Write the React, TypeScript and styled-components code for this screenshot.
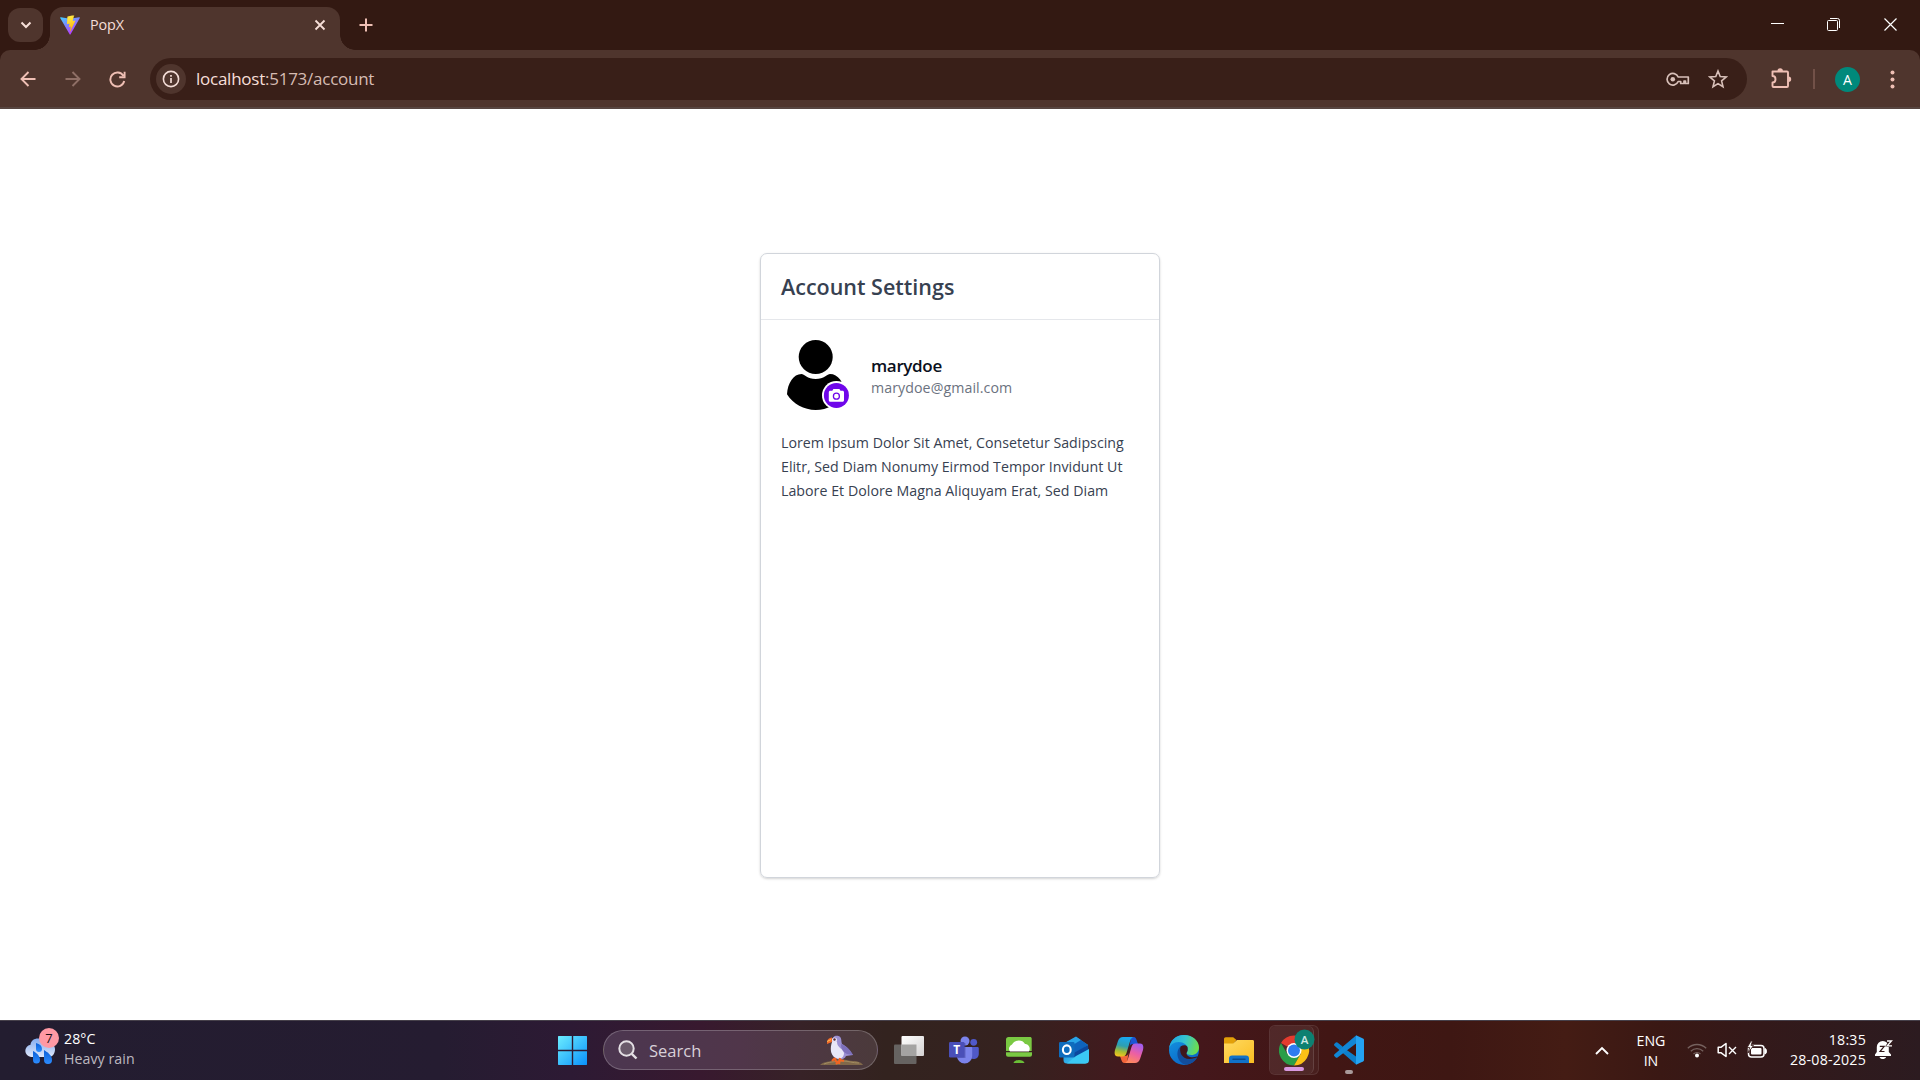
import React from "react";
import styled, { createGlobalStyle } from "styled-components";

const Global = createGlobalStyle`
  * { box-sizing: border-box; }
  html, body { margin: 0; padding: 0; }
  body {
    width: 1920px;
    height: 1080px;
    overflow: hidden;
    background: #fff;
    font-family: "Open Sans", "Noto Sans", sans-serif;
  }
  svg { display: block; flex: none; }
`;

const Screen = styled.div`
  width: 1920px;
  height: 1080px;
  display: flex;
  flex-direction: column;
  overflow: hidden;
`;

/* ---------- Browser ---------- */
const TabStrip = styled.div`
  height: 50px;
  flex: none;
  display: flex;
  background: #331912;
  padding-left: 8px;
`;

const TabSearch = styled.div`
  width: 35px;
  height: 34px;
  margin-top: 8px;
  border-radius: 12px;
  background: #4f352d;
  display: grid;
  place-items: center;
`;

const Tab = styled.div`
  position: relative;
  width: 290px;
  height: 43px;
  margin: 7px 0 0 7px;
  padding: 0 13px 7px 10px;
  display: flex;
  align-items: center;
  background: #4f352d;
  border-radius: 13px 13px 0 0;
  &::before, &::after {
    content: "";
    position: absolute;
    bottom: 0;
    width: 15px;
    height: 15px;
  }
  &::before {
    left: -15px;
    background: radial-gradient(circle at 0 0, transparent 14.5px, #4f352d 15px);
  }
  &::after {
    right: -15px;
    background: radial-gradient(circle at 100% 0, transparent 14.5px, #4f352d 15px);
  }
`;

const TabTitle = styled.span`
  flex: 1;
  margin-left: 10px;
  font-size: 14.4px;
  line-height: 20px;
  letter-spacing: -0.1px;
  color: #f5ded8;
`;

const NewTab = styled.div`
  width: 50px;
  padding-left: 2px;
  display: grid;
  place-items: center;
`;

const WindowButtons = styled.div`
  margin-left: auto;
  display: flex;
  height: 49px;
`;

const WindowButton = styled.div<{ $w: number }>`
  width: ${(p) => p.$w}px;
  display: grid;
  place-items: center;
`;

const ToolbarBack = styled.div`
  height: 59px;
  flex: none;
  background: #331912;
`;

const Toolbar = styled.div`
  height: 59px;
  display: flex;
  align-items: center;
  padding: 1px 0 0 5px;
  background: #4f352d;
  border-radius: 10px 10px 0 0;
  border-bottom: 2px solid #574540;
`;

const NavButton = styled.div<{ $w?: number }>`
  flex: none;
  width: ${(p) => p.$w ?? 45}px;
  height: 45px;
  display: grid;
  place-items: center;
`;

const AddressBar = styled.div`
  flex: none;
  width: 1597px;
  height: 42px;
  margin-left: 10px;
  padding: 0 9px 0 6px;
  display: flex;
  align-items: center;
  border-radius: 21px;
  background: #391f18;
`;

const InfoCircle = styled.div`
  width: 30px;
  height: 30px;
  border-radius: 50%;
  background: #4f352d;
  display: grid;
  place-items: center;
`;

const Url = styled.span`
  margin-left: 10px;
  flex: 1;
  font-size: 17px;
  line-height: 24px;
  letter-spacing: -0.25px;
  color: #f7dfd8;
  span { color: #d6bcb3; }
`;

const AddressIcon = styled.div`
  width: 40px;
  display: grid;
  place-items: center;
`;

const Separator = styled.div`
  flex: none;
  width: 2px;
  height: 20px;
  margin: 0 20px 0 -2px;
  background: #725148;
`;

const ProfileBubble = styled.div`
  flex: none;
  width: 25px;
  height: 25px;
  border-radius: 50%;
  background: #00897b;
  color: #fff;
  font: 14px/25px "Open Sans", sans-serif;
  text-align: center;
`;

/* ---------- Page ---------- */
const Page = styled.main`
  flex: 1;
  display: flex;
  justify-content: center;
  align-items: flex-start;
  padding-top: 144px;
  background: #fff;
`;

const Card = styled.section`
  width: 400px;
  height: 625px;
  border: 1px solid #d1d5db;
  border-radius: 7px;
  box-shadow: 0 1px 3px rgba(0, 0, 0, 0.1), 0 1px 2px rgba(0, 0, 0, 0.08);
`;

const CardHeader = styled.header`
  height: 66px;
  padding: 0 20px;
  display: flex;
  align-items: center;
  border-bottom: 1px solid #e5e7eb;
`;

const CardTitle = styled.h1`
  margin: 0;
  font-size: 21.5px;
  line-height: 30px;
  font-weight: 600;
  letter-spacing: 0;
  color: #374151;
`;

const Profile = styled.div`
  display: flex;
  gap: 20px;
  padding: 20px 20px 0;
`;

const Identity = styled.div`
  padding-top: 14px;
`;

const Name = styled.div`
  font-size: 17px;
  line-height: 24px;
  font-weight: 600;
  letter-spacing: -0.35px;
  color: #0b1020;
`;

const Email = styled.div`
  font-size: 14.2px;
  line-height: 20px;
  letter-spacing: 0.08px;
  color: #6b7280;
`;

const Bio = styled.p`
  margin: 20px 0 0 20px;
  font-size: 14.2px;
  line-height: 24px;
  color: #374151;
  white-space: nowrap;
`;

const BioLine = styled.span<{ $ls: number }>`
  display: block;
  letter-spacing: ${(p) => p.$ls}px;
`;

/* ---------- Taskbar ---------- */
const Taskbar = styled.footer`
  height: 60px;
  flex: none;
  display: flex;
  align-items: stretch;
  border-top: 1px solid #46404a;
  color: #fff;
  background: linear-gradient(90deg, #231d30 0, #251c31 440px, #2d1a34 570px, #38192f 700px, #372227 800px, #33231f 885px, #35221f 1010px, #421a1e 1120px, #44171b 1200px, #411614 1330px, #3e1713 1450px, #441c14 1565px, #3a1814 1660px, #33191a 1760px, #2c1b20 1920px);
`;

const Weather = styled.div`
  width: 545px;
  padding: 7px 0 0 24px;
  display: flex;
  gap: 5px;
`;

const TwoLines = styled.div<{ $align?: string; $ls?: number; $dim?: boolean; $top?: number }>`
  font-size: 14.2px;
  line-height: 20px;
  padding-top: ${(p) => p.$top ?? 0}px;
  letter-spacing: ${(p) => p.$ls ?? 0}px;
  text-align: ${(p) => p.$align ?? "left"};
  white-space: nowrap;
  div + div { color: ${(p) => (p.$dim ? "#bdb9c0" : "#fff")}; }
`;

const TaskCell = styled.div<{ $w?: number }>`
  width: ${(p) => p.$w ?? 55}px;
  padding-bottom: 1px;
  display: flex;
  align-items: center;
  justify-content: center;
`;

const SearchBox = styled.div`
  width: 275px;
  height: 40px;
  margin: 9px 3px 0 4px;
  padding: 0 12px 0 14px;
  display: flex;
  align-items: center;
  border: 1px solid rgba(255, 255, 255, 0.22);
  border-radius: 20px;
  background: linear-gradient(90deg, #4c3650, #50364a 50%, #4b3a3b);
  span {
    flex: 1;
    margin: 1px 0 0 11px;
    font-size: 16.5px;
    line-height: 24px;
    color: #d8d0d8;
  }
`;

const ActiveTile = styled.div`
  width: 50px;
  height: 50px;
  display: flex;
  border-radius: 6px;
  border: 1px solid rgba(255, 255, 255, 0.09);
  background: rgba(255, 255, 255, 0.04);
`;

const ActiveFace = styled.div`
  width: 44px;
  height: 48px;
  padding: 3px 0 0 9px;
  border-radius: 6px;
  border-right: 1px solid rgba(255, 255, 255, 0.12);
  background: rgba(255, 255, 255, 0.045);
`;

const Indicator = styled.div<{ $w: number; $c: string }>`
  width: ${(p) => p.$w}px;
  height: 4px;
  border-radius: 2px;
  background: ${(p) => p.$c};
`;

const CodeCell = styled.div`
  width: 55px;
  display: flex;
  flex-direction: column;
  align-items: center;
  padding-top: 14px;
  gap: 5px;
`;

const Tray = styled.div`
  margin-left: auto;
  display: flex;
  align-items: center;
  padding: 0 18px 1px 0;
`;

const TrayItem = styled.div<{ $w: number }>`
  width: ${(p) => p.$w}px;
  display: flex;
  justify-content: center;
`;

const Clock = styled.div`
  width: 90px;
  display: flex;
  justify-content: flex-end;
`;

const pink = "#efbfb4";

const ViteLogo = () => (
  <svg width="20" height="20" viewBox="0 0 20 20">
    <defs>
      <linearGradient id="va" x1="0" y1="0" x2="0.6" y2="1">
        <stop offset="0" stopColor="#41d1ff" />
        <stop offset="1" stopColor="#bd34fe" />
      </linearGradient>
      <linearGradient id="vb" x1="0.4" y1="0" x2="0.6" y2="1">
        <stop offset="0" stopColor="#ffea45" />
        <stop offset="0.3" stopColor="#ffdd35" />
        <stop offset="1" stopColor="#ffa800" />
      </linearGradient>
    </defs>
    <path d="M19.8 3 10.6 19.3a.6.6 0 0 1-1 0L.2 3c-.3-.5.2-1 .7-.8L10 3.800l9.100-1.600c.5-.1 1 .4.7.8Z" fill="url(#va)" />
    <path d="m14.400.1-6.800 1.300a.3.3 0 0 0-.2.3L7 8.800c0 .2.100.3.3.3l1.900-.4c.2 0 .3.100.3.300l-.6 2.700c0 .2.2.4.4.3l1.100-.3c.2-.1.4.1.400.3l-.9 4.300c-.1.300.300.400.400.200l5-10.500c.1-.2-.100-.4-.3-.4l-1.900.4c-.2 0-.3-.2-.3-.4l1.300-5.200c.1-.2-.1-.3-.3-.3Z" fill="url(#vb)" />
  </svg>
);

const Puffin = () => (
  <svg width="46" height="32" viewBox="0 0 46 32">
    <path d="M1 31c4-4 10-3 15-5 7-2 12 1 18 1 5 0 9 2 10 4Z" fill="#80684a" />
    <path d="M5 30c8-3 13-2 19-3 6 0 9 2 16 2" stroke="#a28c62" fill="none" />
    <path d="M13 7c0-4 3-6 6.500-5C23 3 22 7 23 10c4 2 7 5 11 11l-7 1c-1 3-5 4-9 3-5-2-6-7-5-11Z" fill="#9b90d4" />
    <path d="M13 8c-2 6-2 13 4 16 5 2 8-1 8-5-1-5-7-5-7-11Z" fill="#e8e7f8" />
    <path d="M22 10c5 2 9 5 12 11l-6-1c-4-2-6-5-6-10Z" fill="#7d70bb" />
    <circle cx="15.500" cy="6" r="2.600" fill="#e6e2f5" />
    <circle cx="15.500" cy="5.500" r="1.200" fill="#532b3e" />
    <path d="M13 3.500C9 4 8 6 8 10l5-2Z" fill="#f56a26" />
    <path d="M8 7.500 12 5.500" stroke="#ffc05a" />
    <path d="m16 24-3 3m3-3 1 4m4-4-1 6m1-4 4 1m-5 0-3 3" stroke="#f26522" strokeWidth="2.200" fill="none" />
  </svg>
);

const RainIcon = () => (
  <svg width="35" height="38" viewBox="0 0 35 38">
    <defs>
      <linearGradient id="cloud" x1="0" y1="0" x2="0" y2="1">
        <stop offset="0" stopColor="#7fa9ee" />
        <stop offset="1" stopColor="#dfe7fa" />
      </linearGradient>
      <linearGradient id="drop" x1="0" y1="0" x2="0" y2="1">
        <stop offset="0" stopColor="#0a5fd8" />
        <stop offset="1" stopColor="#2d8dff" />
      </linearGradient>
    </defs>
    <path d="M7 29a6.200 6.200 0 0 1-.5-12.300C7 12 11 10 15 10.500c4-2 9 0 10 4 4 0 6 4 6 7s-2 7.500-6 7.500Z" fill="url(#cloud)" />
    <g fill="url(#drop)">
      <path d="M12 15c4 1 6 3 6 6a3 3 0 0 1-6 0Z" />
      <path d="M9 23c4 2 7 5 7 9a3.500 3.500 0 0 1-7 0Z" />
      <path d="M20 22c5 3 8 6 8 10a4 4 0 0 1-8 0Z" />
    </g>
    <circle cx="25" cy="10" r="10" fill="#ff99a4" />
    <text x="25" y="14.500" textAnchor="middle" fontSize="13" fontFamily="Open Sans, sans-serif" fill="#1c1018">7</text>
  </svg>
);

const Windows = () => (
  <svg width="30" height="30" viewBox="0 0 30 30">
    <defs>
      <linearGradient id="win" gradientUnits="userSpaceOnUse" x1="0" y1="0" x2="30" y2="30">
        <stop offset="0" stopColor="#6ff0ff" />
        <stop offset="1" stopColor="#0a91fb" />
      </linearGradient>
    </defs>
    <path d="M1.500 1h13.300v13.800H1V1.500Zm14.700 0h13.300l.5.5v13.300H16.200ZM1 16.200h13.800V30H1.500L1 29.500Zm15.200 0H30v13.300l-.5.500H16.200Z" fill="url(#win)" />
  </svg>
);

const TaskView = () => (
  <svg width="30" height="30" viewBox="0 0 30 30">
    <defs>
      <linearGradient id="tv" x1="0" y1="0" x2="1" y2="1">
        <stop offset="0" stopColor="#fff" />
        <stop offset="1" stopColor="#d4d2d2" />
      </linearGradient>
    </defs>
    <rect x="0" y="9.500" width="22.500" height="19.500" rx="1" fill="#666361" />
    <rect x="7.500" y="1" width="22.500" height="20" rx="1" fill="url(#tv)" />
    <path d="M7.500 9.500h15V21h-15Z" fill="#a4a3a2" />
  </svg>
);

const Teams = () => (
  <svg width="30" height="30" viewBox="0 0 30 30">
    <circle cx="24.700" cy="7.300" r="3.400" fill="#5059c9" />
    <path d="M20 12h8.500c.8 0 1.300.6 1.300 1.300v6a5 5 0 0 1-9.800 1Z" fill="#5059c9" />
    <circle cx="16" cy="6" r="4.500" fill="#7b83eb" />
    <path d="M8 12h14.200c.6 0 1 .5 1 1v8a7.500 7.500 0 0 1-15.200 0Z" fill="#7b83eb" />
    <path d="M9 8h7.500v15H9Z" fill="#3f3f92" opacity=".45" />
    <rect x="0" y="7" width="15.500" height="15.500" rx="1.300" fill="#4a4fb8" />
    <text x="7.700" y="19" textAnchor="middle" fontSize="12" fontWeight="700" fontFamily="Open Sans, sans-serif" fill="#fff">T</text>
  </svg>
);

const CloudPc = () => (
  <svg width="30" height="30" viewBox="0 0 30 30">
    <path d="M4.500 2H26c1 0 1.700.7 1.700 1.700V16H2V4.500C2 3 3 2 4.500 2Z" fill="#7ac943" />
    <path d="M6 16.500a4.500 4.500 0 0 1 2-7C10.500 4.500 18.500 4 21 9c4 0 6 4.500 3.800 7.500Z" fill="#fff" />
    <path d="M2 17.200h26v2.500a2 2 0 0 1-2 2H4a2 2 0 0 1-2-2Z" fill="#7ac943" />
    <path d="M9.500 28c1-4 10-4 11 0Z" fill="#6abf37" />
  </svg>
);

const Outlook = () => (
  <svg width="30" height="30" viewBox="0 0 30 30">
    <defs>
      <linearGradient id="ol" x1="0" y1="0" x2="1" y2="1">
        <stop offset="0" stopColor="#1578cf" />
        <stop offset="1" stopColor="#49e0ff" />
      </linearGradient>
    </defs>
    <path d="M4.500 9 17 2l12 8v15a3.500 3.500 0 0 1-3.500 3.500H8A3.500 3.500 0 0 1 4.500 25Z" fill="url(#ol)" />
    <path d="M4.500 8.500 17 1.500 22 5 8 13.500H4.500Z" fill="#28a4e8" />
    <path d="m22 5 7 5-13 9h-5l-3-5.500Z" fill="#0e63bd" />
    <path d="m29 10 .5 5L16 23l-3-4Z" fill="#0b479d" />
    <path d="M30 14v11a3.500 3.500 0 0 1-3.500 3.500H8L17 21Z" fill="#3bc9f4" />
    <rect x="0" y="7" width="15.500" height="15.500" rx="1.300" fill="#0f6cbd" />
    <ellipse cx="7.800" cy="14.700" rx="3.900" ry="4.300" fill="none" stroke="#fff" strokeWidth="2.100" />
  </svg>
);

const Copilot = () => (
  <svg width="30" height="30" viewBox="0 0 30 30">
    <defs>
      <linearGradient id="cpa" x1="0.500" y1="0" x2="0.300" y2="1">
        <stop offset="0" stopColor="#19a8f0" />
        <stop offset=".45" stopColor="#2e9fb0" />
        <stop offset=".75" stopColor="#a9bd30" />
        <stop offset="1" stopColor="#f5c320" />
      </linearGradient>
      <linearGradient id="cpb" x1="0.700" y1="0" x2="0.300" y2="1">
        <stop offset="0" stopColor="#a15df0" />
        <stop offset=".5" stopColor="#ec5fa4" />
        <stop offset="1" stopColor="#ff8a5c" />
      </linearGradient>
    </defs>
    <path d="M17 2h2.500c2 0 2.700 1.600 3.300 3.500L24 9h-5c-2 0-3 1-3.500 3Z" fill="#1b55d4" />
    <path d="M13 28h-2.500c-2 0-2.700-1.600-3.300-3.500L6 21h5c2 0 3-1 3.500-3Z" fill="#f2653a" />
    <path d="M9 2h10c-2 1-2.700 3-3.500 6L12.500 18c-.7 2.500-2 3.500-4 3.500H4C.5 21.500.2 18 1 15L4 6c1-2.700 2.500-4 5-4Z" fill="url(#cpa)" />
    <path d="M21 28H11c2-1 2.700-3 3.500-6l3-10c.7-2.500 2-3.500 4-3.500H26c3.500 0 3.800 3.500 3 6.500l-3 9c-1 2.700-2.500 4-5 4Z" fill="url(#cpb)" />
  </svg>
);

const Edge = () => (
  <svg width="30" height="30" viewBox="0 0 30 30">
    <defs>
      <linearGradient id="ea" x1="0" y1=".3" x2="1" y2=".5">
        <stop offset="0" stopColor="#1ea7e6" />
        <stop offset=".5" stopColor="#35c3cf" />
        <stop offset="1" stopColor="#6ee04a" />
      </linearGradient>
      <linearGradient id="eb" x1="0" y1="0" x2=".6" y2="1">
        <stop offset="0" stopColor="#1597e2" />
        <stop offset="1" stopColor="#0a66c6" />
      </linearGradient>
    </defs>
    <circle cx="15" cy="15" r="15" fill="url(#eb)" />
    <path d="M0 14C1 5 7 0 15 0c9 0 15 6 15 12.500 0 5-4 7.500-7.500 7.500-3 0-5-1-5-2 0-.8 1.200-1.300 1.200-4C18.700 10 14.500 7 9.800 7 4.500 7 1 10 0 14Z" fill="url(#ea)" />
    <path d="M11.500 11.500C6 16 8 28 17 29.800c5-.5 9-3 11.300-7.500-6 3-16.800 1-16.800-10.800Z" fill="#124d9c" />
    <path d="M18.500 12c-1-2-4-2.500-7-.5-1.500 5 1 12.500 9 12.500 4 0 6-1 8-1.700.4-.5 0-1-.6-.8C22 23.500 17 21 17.500 18c.200-.8 1.200-1.200 1.200-4Z" fill="#3f161b" />
  </svg>
);

const Folder = () => (
  <svg width="30" height="30" viewBox="0 0 30 30">
    <defs>
      <linearGradient id="fo" x1="0" y1="0" x2="1" y2="1">
        <stop offset="0" stopColor="#ffda61" />
        <stop offset="1" stopColor="#fabd22" />
      </linearGradient>
    </defs>
    <path d="M0 4c0-1 .7-1.800 1.700-1.800h7.500L12.500 5 9 9H0Z" fill="#e3a008" />
    <path d="M9 8.500 13 5h15.500c1 0 1.500.6 1.500 1.500V28H0V8.500Z" fill="url(#fo)" />
    <path d="M5 28v-4.500a3 3 0 0 1 3-3h14a3 3 0 0 1 3 3V28Z" fill="#1172c8" />
    <path d="M9 24.300h12" stroke="#0a4a8c" strokeWidth="1.500" strokeLinecap="round" />
  </svg>
);

const Chrome = () => (
  <svg width="36" height="38" viewBox="0 0 36 38">
    <path d="M15 21.500 2 14a15 15 0 0 1 26 0H15Z" fill="#e33b2e" />
    <path d="M2 14A15 15 0 0 0 15 36.500l6.500-11.250L15 21.500 8.500 25.300Z" fill="#2a9e48" />
    <path d="M28 14a15 15 0 0 1-13 22.500l6.500-11.250V14Z" fill="#fbc116" />
    <circle cx="15" cy="21.500" r="7.500" fill="#fff" />
    <circle cx="15" cy="21.500" r="6" fill="#2e7cf0" />
    <circle cx="25.500" cy="10.500" r="10" fill="#0d8071" />
    <text x="25.500" y="14.700" textAnchor="middle" fontSize="11.500" fontWeight="600" fontFamily="Open Sans, sans-serif" fill="#cfe8e4">A</text>
  </svg>
);

const VsCode = () => (
  <svg width="30" height="30" viewBox="0 0 30 30">
    <path d="M22 .5 9.500 12.300 3.500 7.500a1.300 1.300 0 0 0-1.700 0L.5 8.800a1.300 1.300 0 0 0 0 1.900L22 29.500V21.500L8.500 12Z" fill="#0d7fcc" />
    <path d="M22 .5v8L3.500 22.500a1.300 1.300 0 0 1-1.700 0L.5 21.200a1.300 1.300 0 0 1 0-1.900Z" fill="#1287d6" />
    <path d="M22 .2 29 3.500c.6.3 1 .8 1 1.500v20c0 .7-.4 1.200-1 1.500l-7 3.300Z" fill="#24a3f2" />
  </svg>
);

const Avatar = () => (
  <svg width="70" height="71" viewBox="0 0 70 71">
    <circle cx="34.700" cy="17" r="17" fill="#000" />
    <path d="M20.500 34c-8 0-13.800 9-14.500 20.300C12 64 23 70 34.700 70 46 70 58 64 64 54.500 63 42 57 34 49 34c-2.500 0-6 5-14.300 5S23 34 20.500 34Z" fill="#000" />
    <circle cx="55.400" cy="55.400" r="14.400" fill="#fff" />
    <circle cx="55.400" cy="55.400" r="12.500" fill="#6f06ea" />
    <path d="M49.300 50.800h2l1.100-1.700h6l1.100 1.700h2c.9 0 1.500.6 1.500 1.500v8c0 .9-.6 1.500-1.500 1.500H49.300c-.9 0-1.500-.6-1.500-1.500v-8c0-.9.600-1.500 1.500-1.500Z" fill="#fff" />
    <circle cx="55.400" cy="56.200" r="3" fill="none" stroke="#6f06ea" strokeWidth="1.300" />
  </svg>
);

export default function App() {
  return (
    <Screen>
      <Global />
      <TabStrip>
        <TabSearch>
          <svg width="12" height="8" viewBox="0 0 12 8"><path d="m1.500 1.500 4.500 4.500 4.500-4.500" fill="none" stroke="#f7dfd8" strokeWidth="2" /></svg>
        </TabSearch>
        <Tab>
          <ViteLogo />
          <TabTitle>PopX</TabTitle>
          <svg width="14" height="14" viewBox="0 0 14 14"><path d="m2.500 2.500 9 9m0-9-9 9" stroke="#f7dfd8" strokeWidth="1.800" /></svg>
        </Tab>
        <NewTab>
          <svg width="14" height="14" viewBox="0 0 14 14"><path d="M7 .5v13M.5 7h13" stroke={pink} strokeWidth="2" /></svg>
        </NewTab>
        <WindowButtons>
          <WindowButton $w={56}><svg width="13" height="3"><path d="M0 .5h13" stroke="#fff" /></svg></WindowButton>
          <WindowButton $w={56}>
            <svg width="13" height="13" viewBox="0 0 13 13"><rect x=".5" y="2.500" width="10" height="10" rx="1" fill="none" stroke="#fff" /><path d="M3 .5h7.500a2 2 0 0 1 2 2V10" fill="none" stroke="#fff" /></svg>
          </WindowButton>
          <WindowButton $w={59}><svg width="13" height="13" viewBox="0 0 13 13"><path d="m.5.5 12 12m0-12-12 12" stroke="#fff" strokeWidth="1.200" /></svg></WindowButton>
        </WindowButtons>
      </TabStrip>

      <ToolbarBack>
        <Toolbar>
          <NavButton><svg width="16" height="16" viewBox="0 0 16 16"><path d="M15.500 8H1.500M8.500 1 1.500 8l7 7" fill="none" stroke={pink} strokeWidth="1.900" /></svg></NavButton>
          <NavButton><svg width="16" height="16" viewBox="0 0 16 16"><path d="M.5 8h14M7.500 1l7 7-7 7" fill="none" stroke="#8f6f66" strokeWidth="1.900" /></svg></NavButton>
          <NavButton><svg width="17" height="17" viewBox="0 0 17 17"><path d="M14.300 4.800A7 7 0 1 0 15.200 10M15.600.8v5.400h-5.400" fill="none" stroke={pink} strokeWidth="1.900" /></svg></NavButton>
          <AddressBar>
            <InfoCircle>
              <svg width="18" height="18" viewBox="0 0 18 18"><circle cx="9" cy="9" r="7.600" fill="none" stroke="#f3dcd6" strokeWidth="1.600" /><path d="M9 8v5M9 5v1.800" stroke="#f3dcd6" strokeWidth="1.700" /></svg>
            </InfoCircle>
            <Url>localhost<span>:5173/account</span></Url>
            <AddressIcon>
              <svg width="24" height="15" viewBox="0 0 24 15"><path d="M12.200 5h10.100v6.500h-2.800V9h-1.500v2.500h-3.300V9.500h-2.500A5.800 5.800 0 1 1 12.200 5Z" fill="none" stroke="#d8c0b9" strokeWidth="1.700" strokeLinejoin="round" /><circle cx="6.800" cy="7.300" r="2.300" fill="#d8c0b9" /></svg>
            </AddressIcon>
            <AddressIcon>
              <svg width="20" height="20" viewBox="0 0 20 20"><path d="m10 2 2.200 5.500 5.900.5-4.500 3.900 1.400 5.800-5-3.100-5 3.100 1.400-5.800L1.900 8l5.900-.5Z" fill="none" stroke="#d8c0b9" strokeWidth="1.600" /></svg>
            </AddressIcon>
          </AddressBar>
          <NavButton $w={68}>
            <svg width="22" height="22" viewBox="0 0 22 22"><path d="M2.500 3.500H17a1 1 0 0 1 1 1V18a1 1 0 0 1-1 1H3.500a1 1 0 0 1-1-1v-3.500c4 0 4-6.500 0-6.500Z" fill="none" stroke={pink} strokeWidth="1.900" strokeLinejoin="round" /><path d="M7.500 3a2.700 2.700 0 0 1 5.400 0Zm11 5.500a2.700 2.700 0 0 1 0 5.400Z" fill={pink} /></svg>
          </NavButton>
          <Separator />
          <ProfileBubble>A</ProfileBubble>
          <NavButton $w={65}>
            <svg width="5" height="19" viewBox="0 0 5 19"><g fill={pink}><circle cx="2.500" cy="2.500" r="2" /><circle cx="2.500" cy="9.500" r="2" /><circle cx="2.500" cy="16.500" r="2" /></g></svg>
          </NavButton>
        </Toolbar>
      </ToolbarBack>

      <Page>
        <Card>
          <CardHeader><CardTitle>Account Settings</CardTitle></CardHeader>
          <Profile>
            <Avatar />
            <Identity>
              <Name>marydoe</Name>
              <Email>marydoe@gmail.com</Email>
            </Identity>
          </Profile>
          <Bio>
            <BioLine $ls={0.02}>Lorem Ipsum Dolor Sit Amet, Consetetur Sadipscing</BioLine>
            <BioLine $ls={0.01}>Elitr, Sed Diam Nonumy Eirmod Tempor Invidunt Ut</BioLine>
            <BioLine $ls={0.03}>Labore Et Dolore Magna Aliquyam Erat, Sed Diam</BioLine>
          </Bio>
        </Card>
      </Page>

      <Taskbar>
        <Weather>
          <RainIcon />
          <TwoLines $dim $ls={0.05} $top={1}>
            <div>28°C</div>
            <div>Heavy rain</div>
          </TwoLines>
        </Weather>
        <TaskCell $w={54}><Windows /></TaskCell>
        <SearchBox>
          <svg width="20" height="20" viewBox="0 0 20 20"><circle cx="8.500" cy="8.500" r="7.200" fill="#6a5a6b" stroke="#e4dfe4" strokeWidth="2" /><path d="m13.800 13.800 4.700 4.700" stroke="#e4dfe4" strokeWidth="2.400" /></svg>
          <span>Search</span>
          <Puffin />
        </SearchBox>
        <TaskCell><TaskView /></TaskCell>
        <TaskCell><Teams /></TaskCell>
        <TaskCell><CloudPc /></TaskCell>
        <TaskCell><Outlook /></TaskCell>
        <TaskCell><Copilot /></TaskCell>
        <TaskCell><Edge /></TaskCell>
        <TaskCell><Folder /></TaskCell>
        <TaskCell>
          <ActiveTile>
            <ActiveFace>
              <Chrome />
              <svg width="30" height="4" viewBox="0 0 30 4"><rect x="5" y="0" width="20" height="4" rx="2" fill="#d899e0" /></svg>
            </ActiveFace>
          </ActiveTile>
        </TaskCell>
        <CodeCell><VsCode /><Indicator $w={8} $c="#a89a9a" /></CodeCell>
        <Tray>
          <TrayItem $w={44}><svg width="14" height="9" viewBox="0 0 14 9"><path d="m1 8 6-6 6 6" fill="none" stroke="#fff" strokeWidth="1.900" /></svg></TrayItem>
          <TrayItem $w={54}><TwoLines $align="center" $top={1}><div>ENG</div><div>IN</div></TwoLines></TrayItem>
          <TrayItem $w={38}>
            <svg width="20" height="16" viewBox="0 0 20 16"><g fill="none" stroke="#75615e" strokeWidth="1.300"><path d="M.8 6.300a13 13 0 0 1 18.400 0M3.800 9.200a9 9 0 0 1 12.400 0M6.500 12a5 5 0 0 1 7 0" /></g><circle cx="10" cy="13.500" r="2" fill="#fff" /></svg>
          </TrayItem>
          <TrayItem $w={22}>
            <svg width="20" height="16" viewBox="0 0 20 16"><path d="M1.200 5.200h3L9 1.500v13L4.200 10.800h-3Z" fill="none" stroke="#fff" strokeWidth="1.500" strokeLinejoin="round" /><path d="m12 5 7 7m0-7-7 7" stroke="#fff" strokeWidth="1.400" /></svg>
          </TrayItem>
          <TrayItem $w={38}>
            <svg width="20" height="18" viewBox="0 0 20 18"><rect x="1.500" y="4.500" width="15.500" height="11.500" rx="3" fill="none" stroke="#fff" strokeWidth="1.500" /><rect x="4" y="7" width="10.500" height="6.500" rx="1" fill="#fff" /><path d="M18 7.500c2 .5 2 5 0 5.500Z" fill="#fff" stroke="#fff" /><path d="M4 0 .2 6.500h2.500L1 12l5.500-7.500H4L5.500 0Z" fill="#fff" stroke="#351917" strokeWidth=".8" /></svg>
          </TrayItem>
          <Clock><TwoLines $align="right" $ls={0.2}><div>18:35</div><div>28-08-2025</div></TwoLines></Clock>
          <TrayItem $w={36}>
            <svg width="18" height="20" viewBox="0 0 18 20"><path d="M7.800 1a6 6 0 0 0-6 6v5L0 14.500V16h16v-1.500L13.800 12V7a6 6 0 0 0-6-6Z" fill="#fff" /><path d="M4.500 17h6.600c-1 2.700-5.600 2.700-6.600 0Z" fill="#fff" /><path d="M4.800 6.300h4.400L5 11.500h4.500" fill="none" stroke="#33191a" strokeWidth="1.200" /><path d="M10.500 0H18v7.200h-3l-4.800-.6L12.500 3Z" fill="#311a1c" /><path d="M12 1h4.500l-4.300 4.800H17" fill="none" stroke="#fff" strokeWidth="1.300" /></svg>
          </TrayItem>
        </Tray>
      </Taskbar>
    </Screen>
  );
}
